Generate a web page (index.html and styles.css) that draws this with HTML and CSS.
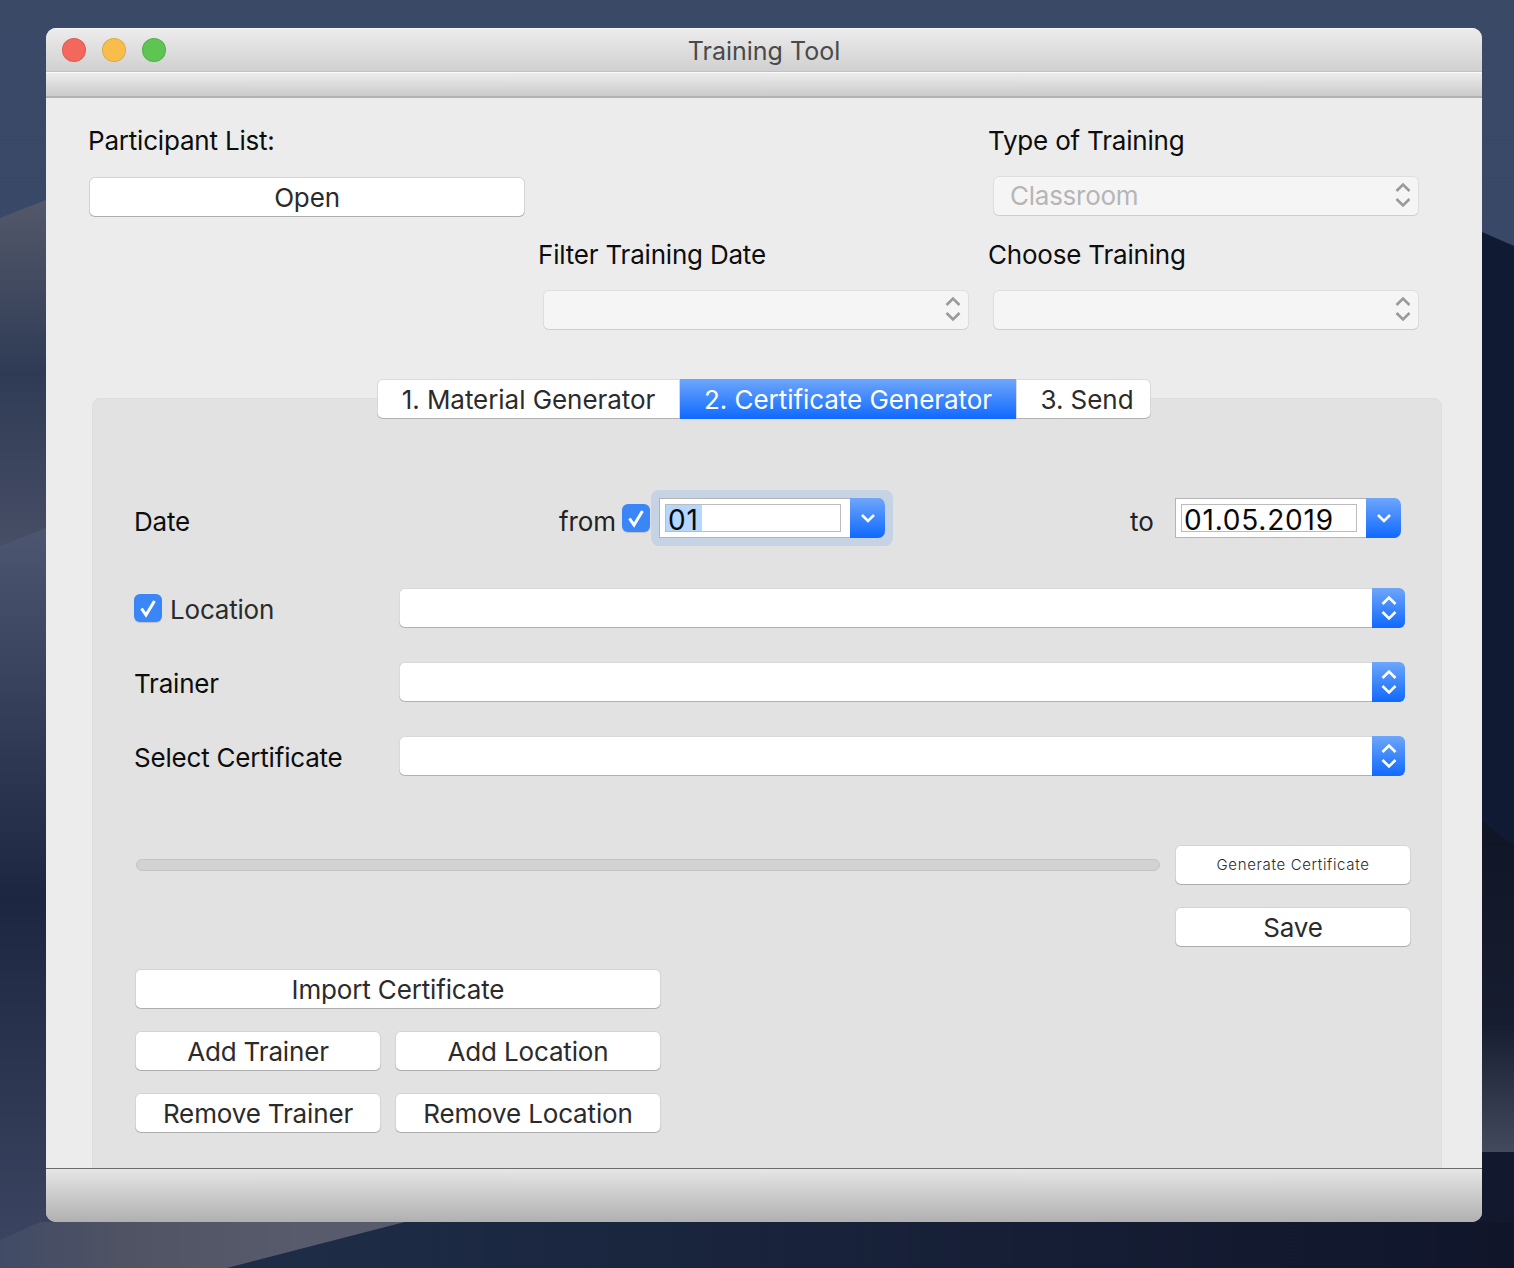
FILE: index.html
```html
<!DOCTYPE html>
<html lang="en">
<head>
    <meta charset="UTF-8">
    <meta name="viewport" content="width=device-width, initial-scale=1.0">
    <title>Training Tool</title>
    <link rel="stylesheet" href="styles.css">
</head>
<body>
    <svg class="wallpaper" viewBox="0 0 1514 1268" preserveAspectRatio="none">
        <defs>
            <linearGradient id="sky" x1="0" y1="0" x2="0" y2="1">
                <stop offset="0" stop-color="#3a4966"/>
                <stop offset="1" stop-color="#34456a"/>
            </linearGradient>
            <linearGradient id="dune1" gradientUnits="userSpaceOnUse" x1="0" y1="200" x2="0" y2="546">
                <stop offset="0" stop-color="#53586a"/>
                <stop offset="0.5" stop-color="#2f3b55"/>
                <stop offset="1" stop-color="#474e66"/>
            </linearGradient>
            <linearGradient id="dune2" gradientUnits="userSpaceOnUse" x1="0" y1="528" x2="0" y2="1268">
                <stop offset="0" stop-color="#4d5670"/>
                <stop offset="0.5" stop-color="#1c2640"/>
                <stop offset="1" stop-color="#3d4763"/>
            </linearGradient>
            <linearGradient id="wedge" gradientUnits="userSpaceOnUse" x1="0" y1="0" x2="300" y2="0">
                <stop offset="0" stop-color="#414b66"/>
                <stop offset="0.4" stop-color="#4f5363"/>
                <stop offset="1" stop-color="#575b6b"/>
            </linearGradient>
            <linearGradient id="night" gradientUnits="userSpaceOnUse" x1="300" y1="0" x2="1514" y2="0">
                <stop offset="0" stop-color="#1e2c46"/>
                <stop offset="1" stop-color="#10152a"/>
            </linearGradient>
            <linearGradient id="rightlow" gradientUnits="userSpaceOnUse" x1="0" y1="830" x2="0" y2="1152">
                <stop offset="0" stop-color="#101626"/>
                <stop offset="0.6" stop-color="#171d30"/>
                <stop offset="1" stop-color="#444a5d"/>
            </linearGradient>
        </defs>
        <rect width="1514" height="1268" fill="url(#sky)"/>
        <path d="M0 218 L46 200 L300 200 L300 1268 L0 1268 Z" fill="url(#dune1)"/>
        <path d="M1400 200 L1482 232 L1514 246 L1514 1268 L700 1268 Z" fill="#101a32"/>
        <path d="M1482 821 L1514 846 L1514 1152 L1482 1152 Z" fill="url(#rightlow)"/>
        <path d="M0 546 L46 528 L300 528 L300 1268 L0 1268 Z" fill="url(#dune2)"/>
        <path d="M40 1222 L405 1222 L227 1268 L0 1268 L0 1240 Z" fill="url(#wedge)"/>
        <path d="M405 1222 L1514 1222 L1514 1268 L227 1268 Z" fill="url(#night)"/>
        <path d="M1482 1152 L1514 1152 L1514 1222 L1482 1222 Z" fill="#12182e"/>
    </svg>

    <div class="window">
        <div class="titlebar">
            <div class="lights">
                <span class="light light-red"></span>
                <span class="light light-yellow"></span>
                <span class="light light-green"></span>
            </div>
            <div class="title">Training Tool</div>
        </div>
        <div class="toolbar"></div>

        <div class="content">
            <div class="top-grid">
                <div class="label">Participant List:</div>
                <div></div>
                <div class="label">Type of Training</div>

                <button class="btn btn-open">Open</button>
                <div></div>
                <div class="select-off">
                    <span>Classroom</span>
                    <svg class="updown" viewBox="0 0 16 26"><path d="M1.5 9 8 2.5 14.5 9M1.5 17 8 23.5 14.5 17"/></svg>
                </div>

                <div></div>
                <div class="label">Filter Training Date</div>
                <div class="label">Choose Training</div>

                <div></div>
                <div class="select-off">
                    <span></span>
                    <svg class="updown" viewBox="0 0 16 26"><path d="M1.5 9 8 2.5 14.5 9M1.5 17 8 23.5 14.5 17"/></svg>
                </div>
                <div class="select-off">
                    <span></span>
                    <svg class="updown" viewBox="0 0 16 26"><path d="M1.5 9 8 2.5 14.5 9M1.5 17 8 23.5 14.5 17"/></svg>
                </div>
            </div>

            <div class="tabs">
                <div class="tab tab-first">1. Material Generator</div>
                <div class="tab tab-active">2. Certificate Generator</div>
                <div class="tab tab-last">3. Send</div>
            </div>

            <div class="panel">
                <div class="date-row">
                    <div class="row-label date-label">Date</div>
                    <div class="from-text">from</div>
                    <span class="check">
                        <svg viewBox="0 0 28 28"><path d="M7.5 14.5 12 21 20.5 7"/></svg>
                    </span>
                    <div class="focus-ring">
                        <div class="date-combo">
                            <div class="date-edit"><span class="selected">01</span></div>
                            <div class="arrow-box">
                                <svg class="chevron" viewBox="0 0 16 10"><path d="M2 2 8 8 14 2"/></svg>
                            </div>
                        </div>
                    </div>
                    <div class="to-text">to</div>
                    <div class="date-combo">
                        <div class="date-edit"><span>01.05.2019</span></div>
                        <div class="arrow-box">
                            <svg class="chevron" viewBox="0 0 16 10"><path d="M2 2 8 8 14 2"/></svg>
                        </div>
                    </div>
                </div>

                <div class="form-row form-row-first">
                    <div class="row-label location-label">
                        <span class="check">
                            <svg viewBox="0 0 28 28"><path d="M7.5 14.5 12 21 20.5 7"/></svg>
                        </span>
                        <span class="location-text">Location</span>
                    </div>
                    <div class="combo">
                        <div class="combo-arrows">
                            <svg class="updown-white" viewBox="0 0 16 26"><path d="M1.5 9 8 2.5 14.5 9M1.5 17 8 23.5 14.5 17"/></svg>
                        </div>
                    </div>
                </div>
                <div class="form-row">
                    <div class="row-label row-label-text">Trainer</div>
                    <div class="combo">
                        <div class="combo-arrows">
                            <svg class="updown-white" viewBox="0 0 16 26"><path d="M1.5 9 8 2.5 14.5 9M1.5 17 8 23.5 14.5 17"/></svg>
                        </div>
                    </div>
                </div>
                <div class="form-row">
                    <div class="row-label row-label-text">Select Certificate</div>
                    <div class="combo">
                        <div class="combo-arrows">
                            <svg class="updown-white" viewBox="0 0 16 26"><path d="M1.5 9 8 2.5 14.5 9M1.5 17 8 23.5 14.5 17"/></svg>
                        </div>
                    </div>
                </div>

                <div class="progress-row">
                    <div class="progress"></div>
                    <button class="btn btn-side btn-small">Generate Certificate</button>
                </div>
                <div class="save-row">
                    <button class="btn btn-side">Save</button>
                </div>

                <div class="actions">
                    <button class="btn btn-wide">Import Certificate</button>
                    <button class="btn">Add Trainer</button>
                    <button class="btn">Add Location</button>
                    <button class="btn">Remove Trainer</button>
                    <button class="btn">Remove Location</button>
                </div>
            </div>
        </div>

        <div class="statusbar"></div>
    </div>
</body>
</html>
```
FILE: styles.css
```css
* {
    box-sizing: border-box;
}
html, body {
    height: 100%;
}
body {
    margin: 0;
    overflow: hidden;
    background: #1b2439;
    font-family: Inter, "Liberation Sans", sans-serif;
    color: #111;
}
.wallpaper {
    position: absolute;
    left: 0;
    top: 0;
    width: 1514px;
    height: 1268px;
}

/* window frame */
.window {
    position: absolute;
    left: 46px;
    top: 28px;
    width: 1436px;
    height: 1194px;
    display: flex;
    flex-direction: column;
    background: #ececec;
    border-radius: 10px;
    overflow: hidden;
}
.titlebar {
    height: 44px;
    flex: none;
    display: flex;
    align-items: center;
    justify-content: center;
    position: relative;
    background: linear-gradient(#ececec, #d0d0d0);
    border-top: 1px solid #f6f6f6;
    border-bottom: 1px solid #c2c2c2;
}
.lights {
    position: absolute;
    left: 16px;
    top: 9px;
    display: flex;
    gap: 16px;
}
.light {
    width: 24px;
    height: 24px;
    border-radius: 50%;
    border: 1px solid rgba(0, 0, 0, 0.1);
}
.light-red { background: #f4675c; }
.light-yellow { background: #f9bd4c; }
.light-green { background: #5ec452; }
.title {
    font-size: 25px;
    line-height: 30px;
    margin-top: 2px;
    color: #4a4a4a;
}
.toolbar {
    height: 26px;
    flex: none;
    background: linear-gradient(#ececec, #cbcbcb);
    border-top: 1px solid #fafafa;
    border-bottom: 2px solid #b2b2b2;
}
.content {
    flex: 1;
    min-height: 0;
    overflow: hidden;
    padding: 0 40px 0 42px;
}
.statusbar {
    height: 54px;
    flex: none;
    background: linear-gradient(#e6e6e6, #b0b0b0);
    border-top: 1px solid #6c6c6c;
}

/* top form */
.top-grid {
    display: grid;
    grid-template-columns: 450px 450px 1fr;
    grid-template-rows: 78px 40px 74px 40px;
}
.label, .row-label {
    font-size: 26px;
    letter-spacing: -0.2px;
    color: #0d0d0d;
}
.label {
    align-self: end;
    line-height: 30px;
    margin-bottom: 20px;
}
.btn {
    height: 40px;
    padding: 0;
    background: #fff;
    border: 0;
    border-radius: 6px;
    box-shadow: inset 0 0 0 1px rgba(0, 0, 0, 0.17), inset 0 -1px 0 rgba(0, 0, 0, 0.18);
    font-family: inherit;
    font-size: 26px;
    letter-spacing: -0.15px;
    color: #2b2b2b;
}
.btn-open {
    width: 436px;
    margin-left: 1px;
    margin-top: 1px;
}
.select-off {
    width: 426px;
    height: 40px;
    margin-left: 5px;
    display: flex;
    align-items: center;
    justify-content: space-between;
    padding: 0 8px 2px 17px;
    background: #f5f5f5;
    border-radius: 6px;
    box-shadow: inset 0 0 0 1px rgba(0, 0, 0, 0.09), inset 0 -1px 0 rgba(0, 0, 0, 0.07);
    font-size: 26px;
    letter-spacing: -0.25px;
    color: #b6b6b6;
}
.updown, .updown-white {
    width: 16px;
    height: 26px;
    fill: none;
    stroke-width: 2.6;
}
.updown {
    stroke: #9a9a9a;
}
.updown-white {
    stroke: #fff;
}

/* tabs */
.tabs {
    display: flex;
    height: 40px;
    width: 774px;
    margin: 49px 0 -21px 289px;
    position: relative;
    z-index: 1;
    font-size: 26px;
    letter-spacing: -0.05px;
}
.tab {
    display: flex;
    align-items: center;
    justify-content: center;
    padding-top: 1px;
    background: #fff;
    color: #2b2b2b;
    box-shadow: inset 0 0 0 1px rgba(0, 0, 0, 0.15), inset 0 -1px 0 rgba(0, 0, 0, 0.18);
}
.tab-first {
    width: 303px;
    border-radius: 6px 0 0 6px;
}
.tab-active {
    width: 336px;
    background: linear-gradient(#6ea6fb, #0f69fe);
    box-shadow: none;
    color: #fff;
}
.tab-last {
    flex: 1;
    padding-left: 7px;
    border-radius: 0 6px 6px 0;
}
.panel {
    margin-left: 4px;
    width: 1350px;
    height: 800px;
    padding: 91px 0 0 41px;
    background: #e2e2e2;
    border: 1px solid #dedede;
    border-radius: 8px 8px 0 0;
}

/* date line */
.date-row {
    display: flex;
    align-items: center;
    height: 56px;
}
.from-text, .to-text {
    font-size: 26px;
    letter-spacing: -0.1px;
    margin-top: 6px;
    color: #222;
}
.from-text {
    width: 63px;
}
.check {
    width: 28px;
    height: 28px;
    flex: none;
    display: inline-block;
    background: #3b86f7;
    border-radius: 6px;
    box-shadow: 0 1px 1px rgba(0, 0, 0, 0.15);
}
.check svg {
    display: block;
    width: 28px;
    height: 28px;
    fill: none;
    stroke: #fff;
    stroke-width: 3;
}
.focus-ring {
    width: 242px;
    height: 56px;
    margin-left: 1px;
    padding: 8px;
    background: #c6d3e4;
    border-radius: 8px;
}
.date-combo {
    width: 226px;
    height: 40px;
    display: flex;
    background: #fff;
    border: 1px solid #b4b4b4;
    border-right: 0;
    border-radius: 0 7px 7px 0;
}
.to-text {
    width: 45px;
    margin-left: 237px;
}
.date-edit {
    flex: 1;
    display: flex;
    align-items: flex-start;
    margin: 5px 9px 5px 5px;
    padding-left: 2px;
    border: 1px solid #bcbcbc;
    font-size: 28px;
    line-height: 31px;
    letter-spacing: 0.8px;
    color: #0a0a0a;
}
.selected {
    width: 36px;
    height: 26px;
    margin-left: -2px;
    padding-left: 2px;
    background: #b3d7ff;
}
.arrow-box {
    width: 35px;
    flex: none;
    margin: -1px 0;
    display: flex;
    align-items: center;
    justify-content: center;
    background: linear-gradient(#6ea6fb, #0f69fe);
    border-radius: 0 7px 7px 0;
}
.chevron {
    width: 16px;
    height: 10px;
    fill: none;
    stroke: #fff;
    stroke-width: 2.6;
}

/* combo rows */
.form-row {
    display: flex;
    align-items: center;
    height: 40px;
    margin-top: 34px;
}
.form-row-first {
    margin-top: 42px;
}
.row-label {
    width: 265px;
    flex: none;
}
.date-label {
    width: 425px;
    margin-top: 6px;
}
.row-label-text, .location-text {
    margin-top: 2px;
}
.location-label {
    display: flex;
    align-items: center;
    gap: 8px;
    color: #2b2b2b;
}
.combo {
    width: 1006px;
    height: 40px;
    display: flex;
    justify-content: flex-end;
    background: #fff;
    border-radius: 6px;
    box-shadow: inset 0 0 0 1px rgba(0, 0, 0, 0.15), inset 0 -1px 0 rgba(0, 0, 0, 0.18);
}
.combo-arrows {
    width: 33px;
    display: flex;
    align-items: center;
    justify-content: center;
    background: linear-gradient(#6ea6fb, #0f69fe);
    border-radius: 0 6px 6px 0;
}

/* bottom part */
.progress-row {
    display: flex;
    align-items: center;
    margin-top: 69px;
}
.progress {
    width: 1024px;
    height: 12px;
    margin-left: 2px;
    background: #d2d2d2;
    border: 1px solid #c4c4c4;
    border-radius: 6px;
}
.btn-side {
    width: 236px;
}
.progress-row .btn-side {
    margin-left: 15px;
}
.btn-small {
    padding-bottom: 2px;
    font-size: 15px;
    font-weight: 300;
    letter-spacing: 0.65px;
}
.save-row {
    margin: 22px 0 0 1041px;
}
.actions {
    display: grid;
    grid-template-columns: 246px 266px;
    column-gap: 14px;
    row-gap: 22px;
    margin: 22px 0 0 1px;
    width: 526px;
}
.btn-wide {
    grid-column: 1 / 3;
}
```
